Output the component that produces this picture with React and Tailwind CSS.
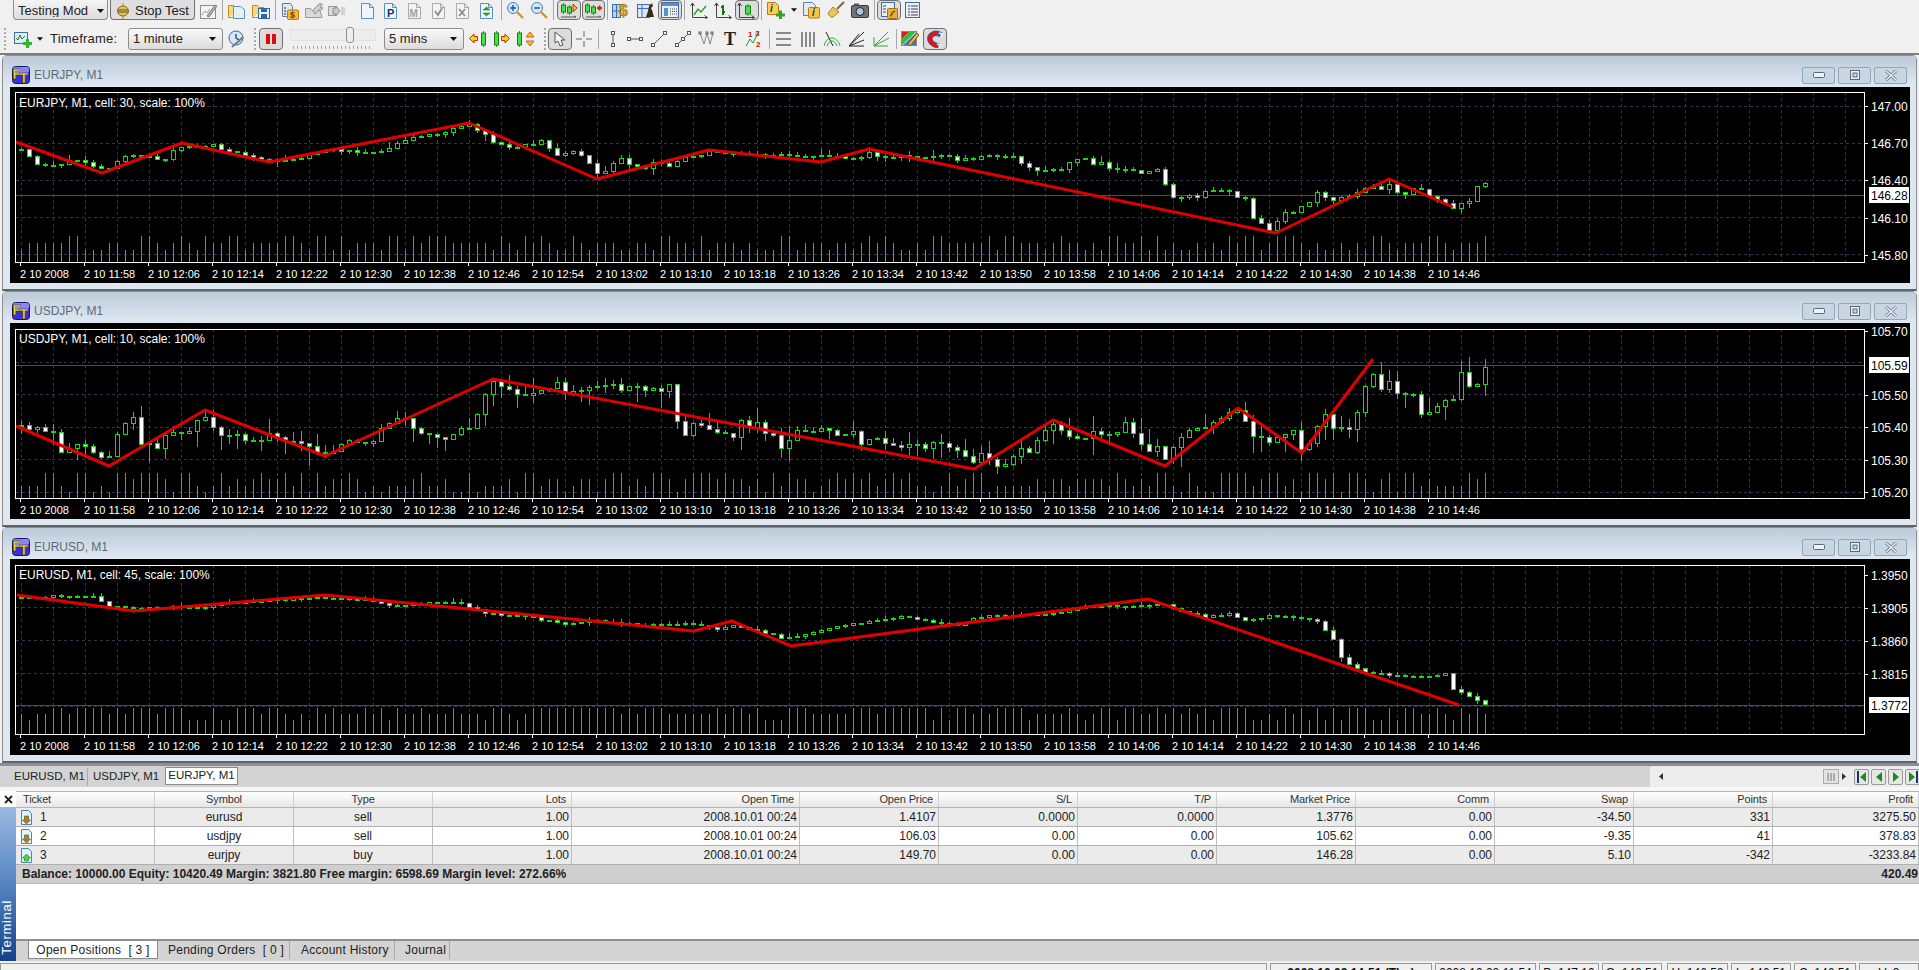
import React from 'react';

// close prices in page pixels, read off the charts: x, y, x, y ...
const CLOSE_1 = [21,150,29,155,37,163,53,166,61,165,69,159,77,159,86,163,94,168,109,169,117,162,126,155,133,156,149,157,157,158,165,159,173,150,182,146,189,147,205,145,213,145,229,150,245,155,253,157,269,159,286,161,301,158,317,152,333,149,349,151,365,152,373,152,382,150,398,143,413,137,429,134,445,132,453,127,469,124,477,129,485,134,493,142,501,144,509,147,517,147,533,143,541,141,549,148,557,155,565,152,573,152,582,156,589,162,597,172,605,172,613,162,621,158,630,164,645,168,654,162,669,165,677,160,693,156,709,151,725,154,741,152,758,155,789,155,813,156,829,156,846,157,862,156,869,152,877,155,893,158,901,154,917,156,942,156,950,155,957,159,973,159,981,155,989,154,1013,157,1021,163,1029,168,1046,169,1061,169,1069,163,1078,157,1085,159,1093,163,1101,162,1109,168,1125,170,1141,172,1149,171,1157,168,1165,183,1173,196,1181,198,1190,196,1198,197,1205,192,1214,189,1230,192,1238,198,1245,197,1253,217,1261,223,1269,230,1277,222,1285,212,1293,212,1301,205,1309,203,1317,193,1325,197,1334,200,1341,198,1357,192,1374,185,1382,190,1390,183,1397,193,1405,195,1414,188,1421,190,1430,197,1445,203,1453,207,1461,204,1469,200,1477,187,1485,184];
const CLOSE_2 = [21,426,29,428,37,428,45,432,53,432,61,452,69,447,77,443,86,448,93,453,101,457,109,457,117,436,125,423,133,418,141,442,149,443,157,449,165,435,173,431,181,434,190,430,197,420,205,417,213,427,221,435,229,434,237,434,245,439,253,442,261,442,269,434,277,437,293,442,309,447,325,454,333,450,341,444,349,441,357,443,373,442,381,428,390,421,405,417,413,426,421,432,429,434,445,438,461,427,469,428,477,413,485,394,493,380,501,386,509,390,517,393,525,396,533,394,541,391,549,388,557,384,565,393,573,392,581,392,589,387,597,386,605,385,613,384,621,389,630,385,645,391,653,389,661,390,669,385,677,423,685,435,693,423,701,425,725,434,733,438,741,421,749,427,757,424,765,432,773,435,781,448,797,431,813,430,821,428,837,435,845,433,853,431,861,443,877,437,885,442,901,446,909,443,925,448,933,441,941,442,949,447,965,455,973,461,981,454,989,457,997,468,1013,457,1022,449,1029,451,1037,440,1053,423,1069,435,1077,438,1085,436,1093,432,1109,434,1117,432,1125,421,1141,445,1149,451,1157,447,1165,458,1173,447,1189,431,1197,428,1205,428,1221,418,1229,413,1237,410,1253,435,1269,442,1277,438,1293,431,1301,448,1309,442,1325,413,1333,427,1341,429,1349,428,1357,411,1365,385,1373,375,1381,387,1390,382,1397,393,1405,393,1414,395,1421,413,1430,411,1437,407,1445,400,1453,398,1461,371,1469,386,1477,384,1485,366];
const CLOSE_3 = [17,598,57,596,100,597,102,605,134,608,172,607,201,607,230,602,277,600,325,597,363,599,392,605,430,603,459,602,488,613,526,617,564,623,593,620,622,623,641,625,689,623,717,628,737,625,765,633,784,638,813,632,842,625,880,620,904,615,928,622,957,625,985,615,1014,615,1052,613,1091,605,1138,605,1162,603,1181,612,1205,616,1229,614,1244,620,1272,615,1301,617,1320,622,1328,635,1334,640,1342,660,1356,668,1366,673,1397,675,1425,677,1445,672,1454,690,1468,695,1478,700,1485,704];

const CHARTS = [
  {
    name: 'EURJPY, M1', cell: 30, top: 87, frameTop: 92, frameBottom: 262, infoY: 107, closes: CLOSE_1, wick: 3, noise: 2.6, seed: 11,
    volumes: [12, 12, 12, 19, 19, 19, 19, 26, 26],
    zigzag: '16,142 102,173 182,143 269,162 469,123 597,179 709,150 821,162 869,149 1276,233 1389,179 1453,207',
    grid: [106, 143, 180, 217, 254],
    labels: [['147.00', 106], ['146.70', 143], ['146.40', 180], ['146.10', 218], ['145.80', 255]],
    current: ['146.28', 195],
  },
  {
    name: 'USDJPY, M1', cell: 10, top: 323, frameTop: 329, frameBottom: 498, infoY: 343, closes: CLOSE_2, wick: 8, noise: 3.4, seed: 23,
    volumes: [6, 12, 12, 19, 19, 19, 25, 25, 25],
    zigzag: '16,426 109,466 205,410 325,456 493,379 974,469 1053,420 1165,466 1238,408 1302,453 1373,359',
    grid: [362, 394, 427, 459, 492],
    labels: [['105.70', 331], ['105.50', 395], ['105.40', 427], ['105.30', 460], ['105.20', 492]],
    current: ['105.59', 365],
  },
  {
    name: 'EURUSD, M1', cell: 45, top: 559, frameTop: 565, frameBottom: 734, infoY: 579, closes: CLOSE_3, wick: 2, noise: 1.8, seed: 37,
    volumes: [14, 20, 20, 20, 26, 26, 26, 26, 26],
    zigzag: '17,595 134,611 325,595 694,631 732,621 791,646 1148,599 1459,705',
    grid: [607, 640, 673, 706],
    labels: [['1.3950', 575], ['1.3905', 608], ['1.3860', 641], ['1.3815', 674]],
    current: ['1.3772', 705],
  },
];

const TIMES = ['2 10 2008'];
for (let i = 0; i < 22; i++) {
  const m = 11 * 60 + 58 + i * 8;
  TIMES.push(`2 10 ${Math.floor(m / 60)}:${String(m % 60).padStart(2, '0')}`);
}

const VGRID = Array.from({ length: 58 }, (_, i) => 21 + i * 32);

function makeRand(seed) {
  let s = seed;
  return () => {
    s = (s * 1664525 + 1013904223) % 4294967296;
    return s / 4294967296;
  };
}

function closeAt(path, x) {
  for (let i = 0; i < path.length - 2; i += 2) {
    if (x <= path[i + 2]) {
      const t = Math.max(0, (x - path[i]) / (path[i + 2] - path[i]));
      return path[i + 1] + (path[i + 3] - path[i + 1]) * t;
    }
  }
  return path[path.length - 1];
}

function Candles({ chart }) {
  const rand = makeRand(chart.seed);
  const bars = [];
  let prev = chart.closes[1];
  for (let i = 0; i < 184; i++) {
    const x = 21 + i * 8;
    const close = closeAt(chart.closes, x) + (rand() - 0.5) * chart.noise;
    const top = Math.round(Math.min(prev, close));
    const bottom = Math.round(Math.max(prev, close));
    const down = close > prev;
    const hi = top - Math.round(rand() * rand() * chart.wick * 2.2);
    const lo = bottom + Math.round(rand() * rand() * chart.wick * 2.6);
    bars.push(
      <g key={i}>
        <line x1={x + 0.5} x2={x + 0.5} y1={hi} y2={lo} stroke="#14d814" />
        {bottom - top <= 1 ? (
          <rect x={x - 2} y={top - 0.5} width={5} height={2} fill="#14d814" />
        ) : (
          <rect x={x - 1.5} y={top + 0.5} width={4} height={bottom - top} fill={down ? '#ffffff' : '#000000'} stroke="#14d814" />
        )}
      </g>
    );
    prev = close;
  }
  return bars;
}

function Volumes({ chart }) {
  const rand = makeRand(chart.seed * 7 + 3);
  return Array.from({ length: 184 }, (_, i) => {
    const h = chart.volumes[Math.floor(rand() * chart.volumes.length)];
    return <rect key={i} x={21 + i * 8} y={chart.frameBottom - h} width={1} height={h} fill="#46ad46" />;
  });
}

function Chart({ chart }) {
  const { top, frameTop, frameBottom } = chart;
  return (
    <svg width="1900" height="196" viewBox={`10 ${top} 1900 196`} className="ml-[7px] block shrink-0 bg-black">
      <g shapeRendering="crispEdges" stroke="#34344c" strokeDasharray="3 3">
        {chart.grid.map((y) => <line key={y} x1="16" x2="1864" y1={y + 0.5} y2={y + 0.5} />)}
        {VGRID.map((x) => <line key={x} x1={x + 0.5} x2={x + 0.5} y1={frameTop} y2={frameBottom} />)}
      </g>
      <g shapeRendering="crispEdges">
        <Volumes chart={chart} />
        <line x1="16" x2="1864" y1={chart.current[1] + 0.5} y2={chart.current[1] + 0.5} stroke="#45457f" />
        <Candles chart={chart} />
      </g>
      <polyline points={chart.zigzag} fill="none" stroke="#e00000" strokeWidth="3" strokeLinejoin="round" />
      <rect x="15.5" y={frameTop + 0.5} width="1849" height={frameBottom - frameTop} fill="none" stroke="#ffffff" shapeRendering="crispEdges" />
      <text x="19" y={chart.infoY} fontSize="12" fill="#ffffff">{chart.name}, cell: {chart.cell}, scale: 100%</text>
      {TIMES.map((t, i) => (
        <g key={t}>
          <line x1={20.5 + i * 64} x2={20.5 + i * 64} y1={frameBottom} y2={frameBottom + 4} stroke="#ffffff" shapeRendering="crispEdges" />
          <text x={20 + i * 64} y={frameBottom + 16} fontSize="11" fill="#ffffff">{t}</text>
        </g>
      ))}
      {chart.labels.map(([label, y]) => (
        <g key={label}>
          <line x1="1865" x2="1868" y1={y + 0.5} y2={y + 0.5} stroke="#ffffff" shapeRendering="crispEdges" />
          <text x="1871" y={y + 5} fontSize="12" fill="#ffffff">{label}</text>
        </g>
      ))}
      <rect x="1869" y={chart.current[1] - 8} width="40" height="16" fill="#ffffff" />
      <text x="1871" y={chart.current[1] + 5} fontSize="12" fill="#000000">{chart.current[0]}</text>
    </svg>
  );
}

const Ic = ({ w = 18, h = 18, className = '', children }) => (
  <svg width={w} height={h} viewBox={`0 0 ${w} ${h}`} fill="none" className={`block shrink-0 ${className}`}>{children}</svg>
);

const FtLogo = () => (
  <Ic className="mr-[4px]">
    <rect x="0.5" y="0.5" width="17" height="17" rx="3" fill="#3a2fd0" stroke="#1b1670" />
    <rect x="1" y="1" width="16" height="6" rx="2" fill="#8d86ee" />
    <text x="0.5" y="13" fontSize="14" fontWeight="bold" fill="#ffe820" stroke="#111" strokeWidth="0.4">F</text>
    <text x="7.5" y="16.5" fontSize="14" fontWeight="bold" fill="#ffe820" stroke="#111" strokeWidth="0.4">T</text>
  </Ic>
);

const Doc = ({ stroke = '#5b8fc7', fill = '#eef5fc' }) => (
  <path d="M2.5 1.5h8l4 4v11h-12z M10.5 1.5v4h4" fill={fill} stroke={stroke} />
);
const Folder = () => (
  <path d="M0.5 15.5v-12h5l1.5 2h5v2M0.5 15.5h11" fill="#f9d77e" stroke="#c98a1a" />
);
const Sep = ({ className = '', h = 'h-[20px]' }) => <div className={`w-[1px] shrink-0 bg-[#a8a8a8] ${h} ${className}`} />;
const Dots = ({ className = '' }) => <div className={`w-[3px] h-[22px] shrink-0 border-l-2 border-dotted border-[#a9a9a9] ${className}`} />;
const Press = ({ className = '', h = 'h-[20px]', children }) => (
  <div className={`flex shrink-0 items-center justify-center rounded-[4px] border border-[#6f6f6f] bg-[#dcdcdc] ${h} ${className}`}>{children}</div>
);
const Caret = ({ className = '' }) => (
  <Ic w={7} h={4} className={className}><path d="M0 0h7L3.5 4z" fill="#111" /></Ic>
);
const Select = ({ className = '', children }) => (
  <div className={`flex h-[22px] shrink-0 items-center justify-between overflow-hidden rounded-[3px] border border-[#8d8d8d] bg-gradient-to-b from-[#fafafa] to-[#dcdcdc] pl-[4px] pr-[6px] text-[13px] text-[#222] ${className}`}>
    <span>{children}</span><Caret />
  </div>
);
const MiniCandle = ({ x = 0, y = 4, h = 10, w = 5 }) => (
  <g>
    <line x1={x + w / 2} x2={x + w / 2} y1={y - 2} y2={y + h + 2} stroke="#1b9e1b" />
    <rect x={x + 0.5} y={y} width={w - 1} height={h} fill="#48e048" stroke="#1b7e1b" />
  </g>
);
const Axes = () => <path d="M2.5 2v14.5h15M2.5 2l-2 3M2.5 2l2 3M17.5 16.5l-3-2M17.5 16.5l-3 2" stroke="#444" />;

const HArrow = ({ dir, className }) => (
  <Ic w={9} h={11} className={className}>
    <path d={dir === 'left' ? 'M0.5 5.5 5 1v2.5h3.5v4H5V10z' : 'M8.5 5.5 4 1v2.5H.5v4H4V10z'} fill="#ffd21c" stroke="#d02a00" />
  </Ic>
);

function ToolbarTop() {
  return (
    <div className="flex h-[26px] items-start pl-[13px]">
      <div className="flex h-[20px] w-[95px] shrink-0 items-center overflow-hidden rounded-b-[4px] border border-t-0 border-[#8d8d8d] bg-gradient-to-b from-[#f5f5f5] to-[#dddddd] pl-[4px] pt-[2px] text-[13px] leading-none text-[#222]">
        <span className="w-[70px] overflow-hidden whitespace-nowrap">Testing Mode</span>
        <Caret className="ml-[9px]" />
      </div>
      <div className="ml-[2px] flex h-[20px] w-[85px] shrink-0 items-center rounded-b-[4px] border border-t-0 border-[#6f6f6f] bg-[#dedede] pl-[6px] pt-[2px] text-[13px] leading-none text-[#222]">
        <Ic w={12} h={16} className="mr-[6px]">
          <path d="M6 0v16" stroke="#b88a14" /><ellipse cx="6" cy="8" rx="5.5" ry="5" fill="#e6c24a" stroke="#8a6a10" /><path d="M1 7h10M1 9h10" stroke="#555" />
        </Ic>
        Stop Test
      </div>
      <Ic className="ml-[4px] mt-[2px]">
        <rect x="1.5" y="3.5" width="15" height="13" fill="#f3f3f3" stroke="#8c8c8c" />
        <path d="M3 13l3-4 2 2 3-4" stroke="#9a9a9a" /><path d="M8 14l8-11 2 1-8 11z" fill="#b0b0b0" stroke="#7d7d7d" />
      </Ic>
      <Sep className="ml-[5px]" />
      <Ic className="ml-[5px] mt-[2px]"><Folder /><path d="M5.5 4.5h7l4 3v9h-11z" fill="#e6f0fb" stroke="#5b8fc7" /></Ic>
      <Ic className="ml-[6px] mt-[2px]"><Folder /><rect x="6.5" y="6.5" width="11" height="10" fill="#e6f0fb" stroke="#2f68a8" /><rect x="9" y="7" width="6" height="3" fill="#2f68a8" /><rect x="9" y="12" width="6" height="4" fill="#2f68a8" /></Ic>
      <Sep className="ml-[5px]" />
      <Ic className="ml-[5px] mt-[2px]">
        <path d="M1.5 1.5h8l2 3v10h-10z" fill="#dfeaf6" stroke="#5b7ea6" />
        <path d="M3 6h2M3 9h2M3 12h2" stroke="#333" />
        <rect x="6.5" y="8" width="11" height="9.5" rx="1" fill="#f3b93a" stroke="#b97a10" />
        <text x="9" y="16" fontSize="9" fontWeight="bold" fill="#6b3c00">$</text>
      </Ic>
      <Ic className="ml-[6px] mt-[2px]">
        <path d="M0.5 15.5v-9h5l1.5 2h8l2 7z" fill="#d9d9d9" stroke="#999" />
        <path d="M8 8l5-5 2-1.5 2.5 1-2.5 1.5 1 2 2-1-1 2.5-3 .5-4 4z" fill="#cfcfcf" stroke="#939393" />
      </Ic>
      <Ic className="ml-[5px] mt-[2px]">
        <rect x="0.5" y="4.5" width="7" height="9" fill="#dcdcdc" stroke="#9c9c9c" />
        <path d="M5 6h3v-2l4 5-4 5v-2H5z" fill="#c9c9c9" stroke="#8e8e8e" />
        <path d="M14 5v8M16 5v8" stroke="#b0b0b0" />
      </Ic>
      <Ic className="ml-[13px] mt-[2px]"><Doc /></Ic>
      <Ic className="ml-[5px] mt-[2px]"><Doc /><text x="5" y="14.5" fontSize="11" fontWeight="bold" fill="#12356b">P</text></Ic>
      <Ic className="ml-[6px] mt-[2px]"><Doc stroke="#a9a9a9" fill="#f3f3f3" /><text x="3.5" y="14.5" fontSize="10" fontWeight="bold" fill="#a0a0a0">M</text></Ic>
      <Ic className="ml-[6px] mt-[2px]"><Doc stroke="#a9a9a9" fill="#f3f3f3" /><path d="M5 9l3 4 4-7" stroke="#8e8e8e" strokeWidth="1.8" /></Ic>
      <Ic className="ml-[6px] mt-[2px]"><Doc stroke="#a9a9a9" fill="#f3f3f3" /><path d="M5 7l6 7M11 7l-6 7" stroke="#8e8e8e" strokeWidth="1.8" /></Ic>
      <Ic className="ml-[6px] mt-[2px]"><Doc /><path d="M5 8l3.500-3 3.500 3zM5 11l3.500 3 3.500-3z" fill="#28a828" stroke="#0f7a0f" strokeWidth="0.5" /></Ic>
      <Sep className="ml-[5px]" />
      <Ic className="ml-[4px] mt-[1px]"><circle cx="7" cy="7" r="5.5" fill="#d3e6f8" stroke="#4a7fb5" /><path d="M4 7h6M7 4v6" stroke="#1f5aa5" strokeWidth="1.5" /><path d="M11 11l6 6" stroke="#c9962a" strokeWidth="2.4" /></Ic>
      <Ic className="ml-[6px] mt-[1px]"><circle cx="7" cy="7" r="5.5" fill="#d3e6f8" stroke="#4a7fb5" /><path d="M4 7h6" stroke="#1f5aa5" strokeWidth="1.5" /><path d="M11 11l6 6" stroke="#c9962a" strokeWidth="2.4" /></Ic>
      <Sep className="ml-[5px]" />
      <Press className="ml-[3px] w-[24px]">
        <Ic>
          <MiniCandle x={1} y={4} h={7} /><MiniCandle x={7} y={6} h={6} />
          <path d="M13 3l4 4-4 4z" fill="#f2c21c" stroke="#c03000" /><path d="M1 16h15l-2-1" stroke="#555" />
        </Ic>
      </Press>
      <Press className="ml-[1px] w-[23px]">
        <Ic>
          <MiniCandle x={0} y={4} h={7} /><MiniCandle x={6} y={6} h={6} />
          <path d="M12 7h5M14.500 4.500v5" stroke="#d02a00" strokeWidth="2" /><path d="M1 16h15l-2-1" stroke="#555" />
        </Ic>
      </Press>
      <Sep className="ml-[2px]" />
      <Ic w={20} className="ml-[4px] mt-[1px]">
        <rect x="0.500" y="3.500" width="8" height="13" fill="#bcd3ea" stroke="#3f6fa8" /><path d="M4.500 3.500v13M0.500 10h8" stroke="#3f6fa8" />
        <text x="7" y="15" fontSize="16" fontWeight="bold" fill="#e0a510" stroke="#8a5a00" strokeWidth="0.4">$</text>
      </Ic>
      <Ic className="ml-[5px] mt-[1px]">
        <rect x="0.500" y="3.500" width="12" height="13" fill="#dbe8f5" stroke="#3f6fa8" /><path d="M0.500 7.500h12M5 3.500v13" stroke="#3f6fa8" />
        <path d="M9 16l2-6 1-5 3-3 1 3-2 2 1 2 2 7z" fill="#3a2c18" />
      </Ic>
      <Press className="ml-[3px] w-[24px]">
        <Ic>
          <rect x="0.500" y="1.500" width="17" height="15" fill="#e8f0f8" stroke="#3f6fa8" /><rect x="1" y="2" width="16" height="3" fill="#5b8fc7" />
          <rect x="3" y="7" width="4" height="8" fill="#5b8fc7" /><path d="M9 8h7M9 10.500h7M9 13h7" stroke="#444" strokeDasharray="1 1" />
        </Ic>
      </Press>
      <Sep className="ml-[2px]" />
      <Ic w={20} className="ml-[5px] mt-[1px]"><Axes /><path d="M4 14l4-6 3 3 5-6" stroke="#25a025" strokeWidth="1.4" /></Ic>
      <Ic className="ml-[4px] mt-[1px]"><Axes /><path d="M9 4v10M7 6h2M9 11h2" stroke="#0f7a0f" strokeWidth="2" /></Ic>
      <Press className="ml-[3px] w-[24px]">
        <Ic w={20}><Axes /><MiniCandle x={8} y={5} h={8} w={6} /></Ic>
      </Press>
      <Sep className="ml-[2px]" />
      <Ic w={20} className="ml-[5px] mt-[1px]">
        <path d="M0.500 1.500h8l3 3v9h-11z" fill="#f6cf5e" stroke="#b97a10" /><text x="3" y="11" fontSize="10" fontWeight="bold" fontStyle="italic" fill="#333">i</text>
        <path d="M9 14h9M13.500 9.500v9" stroke="#2aa82a" strokeWidth="3" />
      </Ic>
      <Caret className="ml-[4px] mt-[8px] w-[6px]" />
      <Ic className="ml-[5px] mt-[1px]">
        <path d="M1.500 1.500h9l3 3v10h-12z" fill="#dfeaf6" stroke="#5b7ea6" /><rect x="6.500" y="6.500" width="11" height="10.500" rx="1" fill="#f3c648" stroke="#b97a10" />
        <text x="10" y="15" fontSize="10" fontWeight="bold" fontStyle="italic" fill="#333">i</text>
      </Ic>
      <Ic className="ml-[7px] mt-[1px]"><path d="M10 8l7-7M1 12l5-6 6 5-6 5c-2 1-4-1-5-4z" fill="#e6c95a" stroke="#a5882a" /><path d="M10 8l7-7" stroke="#7a6a3a" strokeWidth="2" /></Ic>
      <Ic className="ml-[6px] mt-[1px]"><rect x="0.500" y="4.500" width="17" height="12" rx="1.500" fill="#6f7478" stroke="#3b3b3b" /><circle cx="9" cy="10.500" r="4" fill="#a9c7e3" stroke="#222" /><rect x="3" y="2.500" width="5" height="2" fill="#555" /></Ic>
      <Sep className="ml-[5px]" />
      <Press className="ml-[2px] w-[24px]">
        <Ic>
          <rect x="1.500" y="1.500" width="13" height="14" fill="#e8f0f8" stroke="#3f6fa8" /><path d="M3 5h3M3 8h3M3 11h3" stroke="#444" />
          <rect x="7.500" y="7.500" width="10" height="10" rx="1" fill="#e6b040" stroke="#a8700c" /><path d="M10 15c2 0 1-4 5-5" stroke="#7d5400" strokeWidth="1.600" />
        </Ic>
      </Press>
      <Ic w={16} className="ml-[4px] mt-[1px]"><rect x="0.500" y="1.500" width="14" height="15" fill="#e8f0f8" stroke="#3f6fa8" /><path d="M3 5h2M6 5h7M3 8h2M6 8h7M3 11h2M6 11h7M3 14h2M6 14h7" stroke="#444" /></Ic>
    </div>
  );
}

function ToolbarBottom() {
  return (
    <div className="flex h-[25px] items-center pl-[4px]">
      <Dots />
      <Ic w={20} className="ml-[6px]">
        <rect x="1.500" y="2.500" width="13" height="11" fill="#e0ecf8" stroke="#3f6fa8" /><path d="M3 8l2 2 2-5 2 4 3-3" stroke="#1b7e1b" />
        <path d="M10 13.500h9M14.500 9v9" stroke="#2fb82f" strokeWidth="3" />
      </Ic>
      <Caret className="ml-[4px] w-[6px]" />
      <span className="ml-[7px] w-[71px] shrink-0 text-[13px] tracking-[0.2px] text-[#222]">Timeframe:</span>
      <Select className="ml-[7px] w-[95px]">1 minute</Select>
      <Ic className="ml-[4px]">
        <circle cx="9" cy="8" r="7" fill="#d7e7f7" stroke="#33689e" /><path d="M9 4v4l3 2" stroke="#1f3f70" strokeWidth="1.300" />
        <path d="M5 17l8-7 3-3" stroke="#7a7a7a" strokeWidth="2" />
      </Ic>
      <Dots className="ml-[9px]" />
      <Press className="ml-[2px] w-[24px]" h="h-[22px]">
        <Ic w={12} h={12}><rect x="1" y="1" width="4" height="10" fill="#d40d0d" /><rect x="7" y="1" width="4" height="10" fill="#d40d0d" /></Ic>
      </Press>
      <div className="ml-[7px] flex w-[86px] shrink-0 flex-col items-center">
        <div className="flex h-[12px] w-[86px] items-center border border-[#e2e2e2] bg-[#ececec] pl-[55px]">
          <div className="h-[16px] w-[8px] rounded-[3px] border border-[#8f8f8f] bg-[#eeeeee]" />
        </div>
        <div className="mt-[5px] h-[3px] w-[80px] bg-[repeating-linear-gradient(90deg,#a8a8a8_0_1px,transparent_1px_4px)]" />
      </div>
      <Select className="ml-[8px] w-[80px]">5 mins</Select>
      <HArrow dir="left" className="ml-[5px]" />
      <Ic w={7} h={16} className="ml-[2px]"><MiniCandle x={1} y={2} h={12} /></Ic>
      <Ic w={7} h={16} className="ml-[6px]"><MiniCandle x={1} y={2} h={12} /></Ic>
      <HArrow dir="right" className="ml-[1px]" />
      <Ic w={7} h={16} className="ml-[6px]"><MiniCandle x={1} y={2} h={12} /></Ic>
      <Ic w={8} h={14} className="ml-[3px]"><path d="M4 0l4 5H0zM4 14l4-5H0z" fill="#f2c21c" stroke="#d02a00" strokeWidth="0.700" /></Ic>
      <Dots className="ml-[10px]" />
      <Press className="ml-[1px] w-[24px]" h="h-[22px]">
        <Ic w={14} h={16}><path d="M2 1v11l3-2 2 5 3-1-2-5h4z" fill="#f8f8f8" stroke="#555" /></Ic>
      </Press>
      <Ic w={16} h={16} className="ml-[4px]"><path d="M0 8h6M10 8h6M8 0v6M8 10v6" stroke="#666" /></Ic>
      <Sep className="ml-[6px]" />
      <Ic w={6} h={16} className="ml-[11px]"><path d="M3 2v12" stroke="#555" /><rect x="1.500" y="0.500" width="3" height="3" fill="#fff" stroke="#555" /><rect x="1.500" y="12.500" width="3" height="3" fill="#fff" stroke="#555" /></Ic>
      <Ic w={16} h={8} className="ml-[11px]"><path d="M2 4h12" stroke="#555" /><rect x="0.500" y="2.500" width="3" height="3" fill="#fff" stroke="#555" /><rect x="12.500" y="2.500" width="3" height="3" fill="#fff" stroke="#555" /></Ic>
      <Ic w={16} h={16} className="ml-[8px]"><path d="M2 14L14 2" stroke="#555" /><rect x="0.500" y="12.500" width="3" height="3" fill="#fff" stroke="#555" /><rect x="12.500" y="0.500" width="3" height="3" fill="#fff" stroke="#555" /></Ic>
      <Ic w={16} h={16} className="ml-[8px]"><path d="M2 14L14 2" stroke="#555" /><rect x="6.500" y="6.500" width="3" height="3" fill="#fff" stroke="#555" /><rect x="0.500" y="12.500" width="3" height="3" fill="#fff" stroke="#555" /><rect x="12.500" y="0.500" width="3" height="3" fill="#fff" stroke="#555" /></Ic>
      <Ic w={16} h={16} className="ml-[7px]"><path d="M2 2l4 11 3-11 3 11 3-11" stroke="#888" /><rect x="1" y="1" width="2" height="2" stroke="#666" /><rect x="8" y="1" width="2" height="2" stroke="#666" /><rect x="13" y="1" width="2" height="2" stroke="#666" /></Ic>
      <span className="ml-[10px] w-[14px] shrink-0 font-['Liberation_Serif',serif] text-[18px] font-bold leading-none text-[#222]">T</span>
      <Ic w={18} h={18} className="ml-[7px]">
        <path d="M1 16l4-7 3 4 6-12" stroke="#1b9e1b" />
        <text x="3" y="7" fontSize="8" fontWeight="bold" fill="#c01010">1</text>
        <text x="10" y="6" fontSize="8" fontWeight="bold" fill="#c01010">3</text>
        <text x="11" y="17" fontSize="8" fontWeight="bold" fill="#c01010">2</text>
      </Ic>
      <Sep className="ml-[6px]" />
      <Ic w={16} h={16} className="ml-[6px]"><path d="M0 2h15M0 8h15M0 14h15" stroke="#222" /></Ic>
      <Ic w={16} h={16} className="ml-[8px]"><path d="M2 1v15M6 1v15M10 1v15M14 1v15" stroke="#222" /></Ic>
      <Ic w={17} h={16} className="ml-[8px]"><path d="M2 1l7 14" stroke="#222" /><path d="M0 15c1-6 5-8 8-8s7 3 8 8M3 15c1-3 3-5 5-5s4 2 5 5" stroke="#2fa82f" /></Ic>
      <Ic w={16} h={16} className="ml-[8px]"><path d="M0 15L15 1M0 15l15-6M0 15h15M0 15L10 3" stroke="#222" /></Ic>
      <Ic w={17} h={16} className="ml-[8px]"><path d="M1 15L15 1M1 15l15-8M1 15h14M1 6v9" stroke="#2fa82f" /></Ic>
      <Sep className="ml-[6px]" />
      <Ic className="ml-[4px]">
        <rect x="0.500" y="1.500" width="15" height="14" fill="#e8e8e8" stroke="#888" /><path d="M1 2h7L1 9z" fill="#d82020" /><path d="M8 2h7L1 15V9z" fill="#3bb83b" /><path d="M15 3v12H2z" fill="#3a78d8" />
        <path d="M7 14l9-11 2 2-9 11z" fill="#e8c040" stroke="#7a5c00" />
      </Ic>
      <Press className="ml-[4px] w-[24px]" h="h-[22px]">
        <Ic>
          <path d="M15 5C9 1 3 5 4 10c1 3 4 5 9 6" stroke="#3a5fa8" strokeWidth="5.500" />
          <path d="M11 3C7 3 3 6 4 10c1 3 4 5 7 6" stroke="#d81818" strokeWidth="4" />
          <path d="M13 3l3 1-1 3M11 14l3 1-1 3" stroke="#f4f4f4" strokeWidth="1.500" />
        </Ic>
      </Press>
    </div>
  );
}

const WinBtn = ({ children }) => (
  <div className="ml-[3px] flex h-[17px] w-[33px] items-center justify-center rounded-[2px] border border-[#93a6ba] bg-[#c8d6e3]">{children}</div>
);

function ChartWindow({ chart }) {
  return (
    <div className="ml-[2px] h-[236px] w-[1915px] shrink-0 rounded-tl-[5px] rounded-tr-[5px] border-x border-t border-b-2 border-x-[#8b8f94] border-t-[#8b8f94] border-b-[#5f6367] bg-[#dde7f0]">
      <div className="flex h-[31px] items-center bg-gradient-to-b from-[#bccbda] to-[#dfe9f2] pl-[9px] pr-[9px] pt-[7px] text-[12px] text-[#5d6b78]">
        <FtLogo />
        <span>{chart.name}</span>
        <div className="ml-auto flex">
          <WinBtn><Ic w={12} h={6}><rect x="0.500" y="0.500" width="11" height="5" rx="1" fill="#eef2f6" stroke="#586878" /></Ic></WinBtn>
          <WinBtn><Ic w={10} h={10}><rect x="0.500" y="0.500" width="9" height="9" fill="#eef2f6" stroke="#586878" /><rect x="3" y="3" width="4" height="4" fill="#c8d6e3" stroke="#586878" /></Ic></WinBtn>
          <WinBtn><Ic w={14} h={11}><path d="M2 1l10 9M12 1L2 10" stroke="#65758a" strokeWidth="3" /><path d="M2 1l10 9M12 1L2 10" stroke="#eef2f6" strokeWidth="1.400" /></Ic></WinBtn>
        </div>
      </div>
      <Chart chart={chart} />
    </div>
  );
}

const NavBtn = ({ d, className = '', bar }) => (
  <div className={`flex h-[16px] w-[15px] shrink-0 items-center justify-center rounded-[2px] border border-[#9a9a9a] bg-[#e6e6e6] ${className}`}>
    <Ic w={10} h={12}>
      {bar !== undefined && <rect x={bar} y="0" width="2" height="12" fill="#12356b" />}
      <path d={d} fill="#1f8a1f" />
    </Ic>
  </div>
);

function ChartTabs() {
  return (
    <div className="flex h-[24px] shrink-0 border-t-[3px] border-[#8f8f8f] bg-[#d3d3d3] pl-[14px] text-[11.5px] leading-none whitespace-nowrap text-[#222]">
      <span className="mt-[2px] flex h-[18px] w-[74px] items-center border-r border-[#aaaaaa]">EURUSD, M1</span>
      <span className="ml-[5px] mt-[2px] flex h-[18px] w-[71px] items-center">USDJPY, M1</span>
      <span className="ml-[1px] mt-[1px] flex h-[18px] w-[73px] items-center justify-center border border-[#8a8a8a] bg-white">EURJPY, M1</span>
      <div className="ml-[1412px] flex h-[21px] w-[269px] shrink-0 items-center rounded-tl-[3px] bg-[#ededed] pl-[9px]">
        <Ic w={4} h={7}><path d="M4 0v7L0 3.500z" fill="#333" /></Ic>
        <div className="ml-[160px] flex h-[15px] w-[16px] shrink-0 items-center justify-center border border-[#aaaaaa] bg-[#e2e2e2]">
          <Ic w={8} h={8}><path d="M1 0v8M4 0v8M7 0v8" stroke="#777" /></Ic>
        </div>
        <Ic w={4} h={7} className="ml-[3px]"><path d="M0 0v7l4-3.500z" fill="#333" /></Ic>
        <NavBtn className="ml-[8px]" d="M9 1v10L3 6z" bar={0} />
        <NavBtn className="ml-[2px]" d="M8 1v10L2 6z" />
        <NavBtn className="ml-[2px]" d="M2 1v10l6-5z" />
        <NavBtn className="ml-[2px]" d="M1 1v10l6-5z" bar={8} />
      </div>
    </div>
  );
}

const COLS = 'grid grid-cols-[139px_139px_139px_139px_228px_139px_139px_139px_139px_139px_139px_139px_146px]';
const HEADERS = ['Ticket', 'Symbol', 'Type', 'Lots', 'Open Time', 'Open Price', 'S/L', 'T/P', 'Market Price', 'Comm', 'Swap', 'Points', 'Profit'];
const ROWS = [
  ['1', 'eurusd', 'sell', '1.00', '2008.10.01 00:24', '1.4107', '0.0000', '0.0000', '1.3776', '0.00', '-34.50', '331', '3275.50'],
  ['2', 'usdjpy', 'sell', '1.00', '2008.10.01 00:24', '106.03', '0.00', '0.00', '105.62', '0.00', '-9.35', '41', '378.83'],
  ['3', 'eurjpy', 'buy', '1.00', '2008.10.01 00:24', '149.70', '0.00', '0.00', '146.28', '0.00', '5.10', '-342', '-3233.84'],
];

const TradeIcon = ({ up }) => (
  <Ic w={13} h={15} className="ml-[4px] mr-[7px]">
    <path d="M1.500 0.500h7l3 3v11h-10z" fill="#e8f2fb" stroke="#4d83b8" />
    {up ? (
      <path d="M6.500 6l4 4H8.500v3h-4v-3H2.500z" fill="#4fd44f" stroke="#1c8a1c" strokeWidth="0.700" />
    ) : (
      <path d="M6.500 14l4-4H8.500V6h-4v4H2.500z" fill="#e0603c" stroke="#1c8a1c" strokeWidth="0.700" />
    )}
  </Ic>
);

function Cell({ i, children }) {
  if (i === 1 || i === 2) return <div className="flex items-center justify-center border-r border-[#bdbdbd]">{children}</div>;
  return <div className="flex items-center justify-end border-r border-[#bdbdbd] pr-[2px]">{children}</div>;
}

function Terminal() {
  return (
    <div className="flex h-[170px] shrink-0">
      <div className="flex w-[16px] shrink-0 flex-col bg-gradient-to-b from-[#a7c3e6] via-[#5d8bc6] to-[#15418a]">
        <div className="flex h-[16px] w-[16px] items-center justify-center bg-white">
          <Ic w={9} h={9}><path d="M1 1l7 7M8 1L1 8" stroke="#222" strokeWidth="1.800" /></Ic>
        </div>
        <div className="mb-[6px] mt-auto flex rotate-180 justify-center text-[13px] leading-none tracking-[0.7px] text-white [writing-mode:vertical-rl]">Terminal</div>
      </div>
      <div className="flex w-[1903px] flex-col bg-white">
        <div className={`${COLS} h-[17px] border-y border-[#b4b4b4] bg-gradient-to-b from-white to-[#e6e6e6] text-[11px] leading-none tracking-[-0.15px] text-[#333]`}>
          {HEADERS.map((h, i) =>
            i === 0 ? (
              <div key={h} className="flex items-center border-r border-[#d0d0d0] pl-[7px]">{h}</div>
            ) : i === 1 || i === 2 ? (
              <div key={h} className="flex items-center justify-center border-r border-[#d0d0d0]">{h}</div>
            ) : (
              <div key={h} className="flex items-center justify-end border-r border-[#d0d0d0] pr-[5px]">{h}</div>
            )
          )}
        </div>
        {ROWS.map((row, r) => (
          <div key={row[0]} className={`${COLS} h-[19px] border-b border-[#b0b0b0] text-[12px] leading-none text-[#222] ${r === 1 ? 'bg-white' : 'bg-[#ebebeb]'}`}>
            {row.map((v, i) =>
              i === 0 ? (
                <div key={i} className="flex items-center border-r border-[#bdbdbd]">
                  <TradeIcon up={r === 2} />{v}
                </div>
              ) : (
                <Cell key={i} i={i}>{v}</Cell>
              )
            )}
          </div>
        ))}
        <div className="flex h-[19px] items-center justify-between border-b border-[#b8b8b8] bg-[#cfcfcf] pl-[6px] pr-[1px] text-[12px] font-bold leading-none text-[#222]">
          <span>Balance: 10000.00 Equity: 10420.49 Margin: 3821.80 Free margin: 6598.69 Margin level: 272.66%</span>
          <span>420.49</span>
        </div>
        <div className="min-h-0 flex-1 bg-white" />
        <div className="flex h-[22px] shrink-0 border-t-2 border-[#8f8f8f] bg-[#d3d3d3] pl-[12px] text-[12px] leading-none tracking-[0.25px] text-[#222]">
          <span className="flex h-[18px] w-[130px] items-center justify-center border border-t-0 border-[#8a8a8a] bg-white">Open Positions&nbsp; [ 3 ]</span>
          <span className="ml-[10px] flex h-[18px] w-[122px] items-center border-r border-[#aaaaaa]">Pending Orders&nbsp; [ 0 ]</span>
          <span className="ml-[11px] flex h-[18px] w-[94px] items-center border-r border-[#aaaaaa]">Account History</span>
          <span className="ml-[10px] flex h-[18px] w-[45px] items-center border-r border-[#aaaaaa]">Journal</span>
        </div>
      </div>
    </div>
  );
}

const StatusCell = ({ className = '', children }) => (
  <div className={`h-[20px] shrink-0 border border-[#9a9a9a] pt-[2px] text-center text-[12px] leading-[15px] text-[#111] ${className}`}>{children}</div>
);

function StatusBar() {
  return (
    <div className="mt-[2px] flex h-[7px] overflow-hidden bg-[#f0f0f0]">
      <StatusCell className="w-[1267px]" />
      <StatusCell className="ml-[3px] w-[162px] font-bold">2008.10.02 14:51 (Thu)</StatusCell>
      <StatusCell className="ml-[3px] w-[101px]">2008.10.02 11:54</StatusCell>
      <StatusCell className="ml-[3px] w-[60px]">P: 147.10</StatusCell>
      <StatusCell className="ml-[3px] w-[60px]">O: 146.51</StatusCell>
      <StatusCell className="ml-[5px] w-[61px]">H: 146.52</StatusCell>
      <StatusCell className="ml-[3px] w-[60px]">L: 146.51</StatusCell>
      <StatusCell className="ml-[3px] w-[62px]">C: 146.51</StatusCell>
      <StatusCell className="ml-[3px] w-[60px]">V: 3</StatusCell>
    </div>
  );
}

export default function App() {
  return (
    <div className="flex h-[970px] w-[1919px] flex-col overflow-hidden bg-[#f0f0f0] [font-family:'Liberation_Sans',Arial,sans-serif]">
      <div className="h-[55px] shrink-0 border-b-2 border-[#7d7d7d] bg-[#f0f0f0]">
        <ToolbarTop />
        <ToolbarBottom />
      </div>
      {CHARTS.map((c) => <ChartWindow key={c.name} chart={c} />)}
      <ChartTabs />
      <div className="h-[4px] shrink-0 bg-[#f6f6f6]" />
      <Terminal />
      <StatusBar />
    </div>
  );
}
